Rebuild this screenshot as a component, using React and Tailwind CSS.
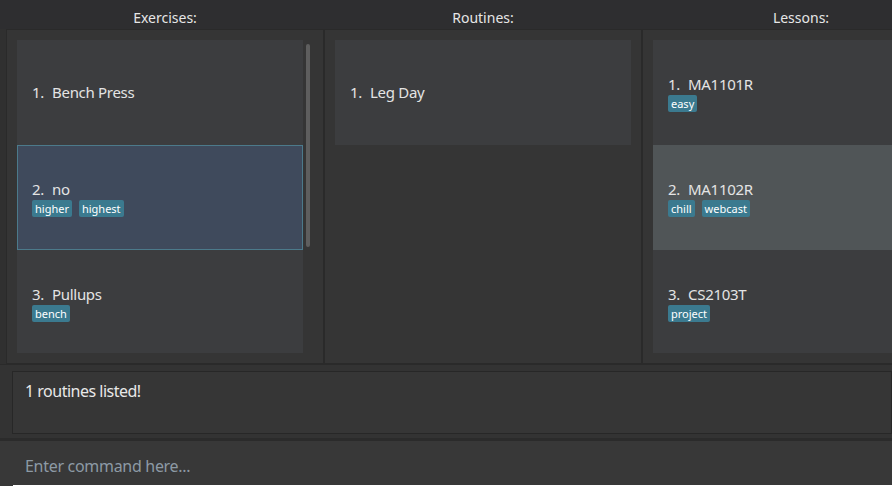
import React from "react";

const exercises = [
  { name: "Bench Press", tags: [] },
  { name: "no", tags: ["higher", "highest"], selected: true },
  { name: "Pullups", tags: ["bench"] },
];

const routines = [{ name: "Leg Day", tags: [] }];

const lessons = [
  { name: "MA1101R", tags: ["easy"] },
  { name: "MA1102R", tags: ["chill", "webcast"], selected: true, grey: true },
  { name: "CS2103T", tags: ["project"] },
];

function Card({ index, item }) {
  let look = "bg-[#3c3d3f] border border-transparent";
  if (item.selected && item.grey) look = "bg-[#505557] border border-transparent";
  else if (item.selected) look = "bg-[#3f4a5c] border border-[#4c7a8b]";
  const hasTags = item.tags.length > 0;
  return (
    <div className={`h-[105px] shrink-0 flex flex-col justify-center pl-[14px] ${hasTags ? "pt-[1px]" : ""} ${look}`}>
      <div className="flex gap-[8px] text-[15px] leading-[19px] tracking-[-0.3px] text-[#e4e4e4]">
        <span>{index}.</span>
        <span>{item.name}</span>
      </div>
      {hasTags && (
        <div className="flex gap-[7px] mt-[1px]">
          {item.tags.map((t) => (
            <span key={t} className="bg-[#3b7a8f] text-white text-[11px] leading-[17px] px-[3px] rounded-[2px]">
              {t}
            </span>
          ))}
        </div>
      )}
    </div>
  );
}

function Column({ title, items, scroll }) {
  return (
    <div className="w-[318px] shrink-0 flex flex-col">
      <div className="h-[29px] flex items-center justify-center text-[14px] text-[#e6e6e6] pt-[6px]">
        {title}
      </div>
      <div className="h-[335px] bg-[#353535] border border-[#2a2a2a] flex pt-[10px] pl-[10px] pr-[10px]">
        <div className="flex-1 flex flex-col overflow-hidden h-[313px]">
          {items.map((it, i) => (
            <Card key={i} index={i + 1} item={it} />
          ))}
        </div>
        {scroll && (
          <div className="w-[10px] flex justify-center pt-[4px]">
            <div className="w-[4px] h-[203px] rounded-full bg-[#5e5e5e]" />
          </div>
        )}
      </div>
    </div>
  );
}

export default function App() {
  return (
    <div
      className="w-[892px] h-[486px] overflow-hidden bg-[#303030] flex flex-col"
      style={{ fontFamily: '"Noto Sans", "Open Sans", sans-serif' }}
    >
      <div className="flex pl-[6px] bg-[linear-gradient(#2e2e30_0px,#2e2e30_29px,#303030_29px)]">
        <Column title="Exercises:" items={exercises} scroll />
        <Column title="Routines:" items={routines} />
        <Column title="Lessons:" items={lessons} />
      </div>
      <div className="h-[74px] border-t border-[#2a2a2a] pl-[12px] pt-[6px] pb-[4px] bg-[#333333]">
        <div className="h-[63px] bg-[#363636] border border-[#272727] pl-[12px] pt-[7px] text-[16px] tracking-[-0.5px] text-[#e8e8e8]">
          1 routines listed!
        </div>
      </div>
      <div className="flex-1 border-t-[3px] border-[#2b2b2b] bg-[#383838] pl-[25px] flex items-center pt-[4px] relative">
        <span className="text-[16px] tracking-[-0.3px] text-[#8d9aa5]">Enter command here...</span>
        <div className="absolute left-[13px] right-0 bottom-0 h-[1px] bg-white" />
      </div>
    </div>
  );
}
